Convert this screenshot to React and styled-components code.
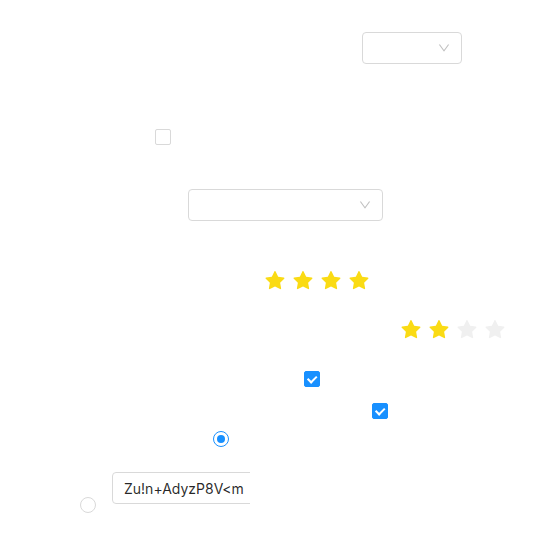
import React from 'react';
import styled, { createGlobalStyle, css } from 'styled-components';

const GlobalStyle = createGlobalStyle`
    html, body {
        margin: 0;
        padding: 0;
        background: #ffffff;
    }
    body {
        font-family: Inter, "Noto Sans", "Liberation Sans", sans-serif;
        font-size: 14px;
        color: rgba(0, 0, 0, 0.85);
    }
`;

const primary = '#1890ff';
const border = '#d9d9d9';

// The widgets sit at free places on a test canvas: their place is the content.
const Canvas = styled.div`
    position: relative;
    width: 550px;
    height: 553px;
    overflow: hidden;
`;

const Placed = styled.div`
    position: absolute;
    left: ${p => p.$x}px;
    top: ${p => p.$y}px;
`;

const SelectBox = styled.div`
    box-sizing: border-box;
    width: ${p => p.$width}px;
    height: 32px;
    border: 1px solid ${border};
    border-radius: 4px;
    background: #fff;
    display: flex;
    align-items: center;
    justify-content: flex-end;
    padding: 0 11px;
    color: rgba(0, 0, 0, 0.25);
`;

const boxBase = css`
    box-sizing: border-box;
    width: 16px;
    height: 16px;
`;

const CheckBox = styled.span`
    ${boxBase}
    display: block;
    position: relative;
    border-radius: 2px;
    border: 1px solid ${p => (p.$checked ? primary : border)};
    background: ${p => (p.$checked ? primary : '#fff')};

    &::after {
        content: '';
        display: ${p => (p.$checked ? 'block' : 'none')};
        position: absolute;
        top: 50%;
        left: 21.5%;
        box-sizing: border-box;
        width: 5.7px;
        height: 9.1px;
        border: 2px solid #fff;
        border-top: 0;
        border-left: 0;
        transform: rotate(45deg) scale(1) translate(-50%, -50%);
    }
`;

const RadioBox = styled.span`
    ${boxBase}
    display: flex;
    align-items: center;
    justify-content: center;
    border-radius: 50%;
    border: 1px solid ${p => (p.$checked ? primary : border)};
    background: #fff;

    &::after {
        content: '';
        display: ${p => (p.$checked ? 'block' : 'none')};
        width: 8px;
        height: 8px;
        border-radius: 50%;
        background: ${primary};
    }
`;

const RateList = styled.ul`
    display: flex;
    gap: 8px;
    margin: 0;
    padding: 0;
    list-style: none;
`;

const Star = styled.li`
    width: 20px;
    height: 20px;
    color: ${p => (p.$on ? '#fadb14' : '#f0f0f0')};
    svg {
        display: block;
    }
`;

const InputClip = styled.div`
    width: 138px;
    overflow: hidden;
`;

const TextInput = styled.input`
    box-sizing: border-box;
    width: 200px;
    height: 32px;
    padding: 4px 11px;
    border: 1px solid ${border};
    border-radius: 4px;
    font: inherit;
    font-size: 14px;
    color: rgba(0, 0, 0, 0.85);
    outline: none;
`;

function DownArrow() {
    return (
        <svg width="12" height="12" viewBox="64 64 896 896" fill="currentColor">
            <path d="M884 256h-75c-5.1 0-9.9 2.5-12.9 6.6L512 654.2 227.9 262.6c-3-4.1-7.8-6.6-12.9-6.6h-75c-6.5 0-10.3 7.4-6.5 12.7l352.6 486.1c12.8 17.6 39 17.6 51.7 0l352.6-486.1c3.9-5.3.1-12.7-6.4-12.7z" />
        </svg>
    );
}

function StarIcon() {
    return (
        <svg width="20" height="20" viewBox="64 64 896 896" fill="currentColor">
            <path d="M908.1 353.1l-253.9-36.9L540.7 86.1c-3.1-6.3-8.2-11.4-14.5-14.5-15.8-7.8-35-1.3-42.9 14.5L369.8 316.2l-253.9 36.9c-7 1-13.4 4.3-18.3 9.3a32.05 32.05 0 00.6 45.3l183.7 179.1-43.4 252.9a31.95 31.950 0 0046.4 33.7L512 754l227.1 119.4c6.2 3.3 13.4 4.4 20.3 3.2 17.4-3 29.1-19.5 26.1-36.9l-43.4-252.9 183.7-179.1c5-4.9 8.3-11.3 9.3-18.3 2.7-17.5-9.5-33.7-27-36.3z" />
        </svg>
    );
}

function Rate({ value }) {
    return (
        <RateList>
            {[1, 2, 3, 4].map(n => (
                <Star key={n} $on={n <= value}><StarIcon /></Star>
            ))}
        </RateList>
    );
}

function Select({ width }) {
    return (
        <SelectBox $width={width}>
            <DownArrow />
        </SelectBox>
    );
}

export default function App() {
    return (
        <>
            <GlobalStyle />
            <Canvas>
                <Placed $x={362} $y={32}><Select width={100} /></Placed>
                <Placed $x={155} $y={129}><CheckBox /></Placed>
                <Placed $x={188} $y={189}><Select width={195} /></Placed>
                <Placed $x={265} $y={271}><Rate value={4} /></Placed>
                <Placed $x={401} $y={320}><Rate value={2} /></Placed>
                <Placed $x={304} $y={371}><CheckBox $checked /></Placed>
                <Placed $x={372} $y={403}><CheckBox $checked /></Placed>
                <Placed $x={213} $y={431}><RadioBox $checked /></Placed>
                <Placed $x={112} $y={472}>
                    <InputClip>
                        <TextInput defaultValue="Zu!n+AdyzP8V<m" />
                    </InputClip>
                </Placed>
                <Placed $x={80} $y={497}><RadioBox /></Placed>
            </Canvas>
        </>
    );
}
